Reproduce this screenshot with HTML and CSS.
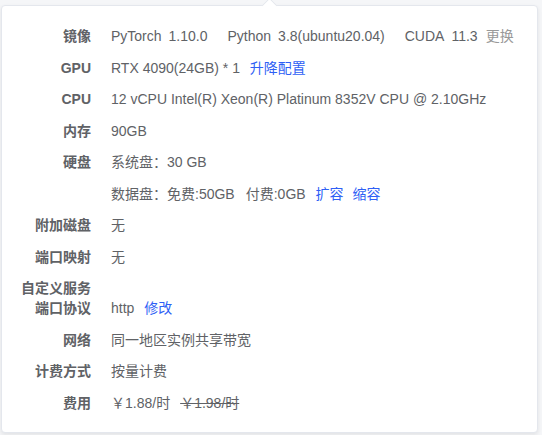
FILE: index.html
```html
<!DOCTYPE html>
<html lang="zh-CN">

<head>
  <meta charset="UTF-8">
  <meta name="viewport" content="width=device-width, initial-scale=1.0">
  <title>实例配置</title>
  <link rel="stylesheet" href="styles.css">
</head>

<body>

  <div class="popover">
    <div class="popArrow"></div>

    <div class="specList">
      <div class="specLabel">镜像</div>
      <div class="specValue imageRow">
        <span class="pkg">PyTorch<span class="ver">1.10.0</span></span>
        <span class="pkg">Python<span class="ver">3.8(ubuntu20.04)</span></span>
        <span class="pkg">CUDA<span class="ver">11.3</span></span>
        <a class="muted">更换</a>
      </div>

      <div class="specLabel">GPU</div>
      <div class="specValue">RTX 4090(24GB) * 1 <a class="link">升降配置</a></div>

      <div class="specLabel">CPU</div>
      <div class="specValue">12 vCPU Intel(R) Xeon(R) Platinum 8352V CPU @ 2.10GHz</div>

      <div class="specLabel">内存</div>
      <div class="specValue">90GB</div>

      <div class="specLabel">硬盘</div>
      <div class="specValue">系统盘：30 GB</div>

      <div class="specLabel"></div>
      <div class="specValue">数据盘：免费:50GB<span class="gapItem">付费:0GB</span><a class="link">扩容</a><a class="link">缩容</a></div>

      <div class="specLabel">附加磁盘</div>
      <div class="specValue">无</div>

      <div class="specLabel">端口映射</div>
      <div class="specValue">无</div>

      <div class="specLabel">自定义服务<br>端口协议</div>
      <div class="specValue lastLine">http <a class="link">修改</a></div>

      <div class="specLabel">网络</div>
      <div class="specValue">同一地区实例共享带宽</div>

      <div class="specLabel">计费方式</div>
      <div class="specValue">按量计费</div>

      <div class="specLabel">费用</div>
      <div class="specValue">￥1.88/时<span class="oldPrice">￥1.98/时</span></div>
    </div>
  </div>

</body>

</html>
```

FILE: styles.css
```css
body {
  margin: 0;
  padding: 5px 0 0 1px;
  background-color: #f5f6f8;
  font-family: "Liberation Sans", "Noto Sans CJK SC", sans-serif;
  font-size: 14px;
  color: #606266;
  height: 100vh;
  box-sizing: border-box;
  overflow: hidden;
}

.popover {
  position: relative;
  width: 537px;
  box-sizing: border-box;
  background: #fff;
  border: 1px solid #e4e7ed;
  border-radius: 4px;
  box-shadow: 0 2px 4px rgba(0, 0, 0, 0.08);
  padding: 20px 19px 19px 19px;
}

/* little triangle on top */
.popArrow {
  position: absolute;
  top: -6px;
  left: 262px;
  width: 10px;
  height: 10px;
  background: #fff;
  border-top: 1px solid #e4e7ed;
  border-left: 1px solid #e4e7ed;
  transform: rotate(45deg);
}

.specList {
  display: grid;
  grid-template-columns: 70px auto;
  column-gap: 20px;
  row-gap: 11.5px;
  line-height: 20px;
}

.specLabel {
  text-align: right;
  font-weight: bold;
  color: #606266;
  white-space: nowrap;
}

.specValue {
  white-space: nowrap;
}

.lastLine {
  align-self: end;
}

.imageRow {
  display: flex;
}

.pkg {
  margin-right: 20px;
}

.pkg:nth-child(3) {
  margin-right: 8px;
}

.ver {
  margin-left: 7px;
}

a {
  cursor: pointer;
}

.link {
  color: #2f5ff5;
  margin-left: 6px;
}

.muted {
  color: #999;
}

.gapItem {
  margin-left: 11px;
}

.gapItem + .link {
  margin-left: 10px;
}

.link + .link {
  margin-left: 9px;
}

.oldPrice {
  margin-left: 10px;
  text-decoration: line-through;
}
```
